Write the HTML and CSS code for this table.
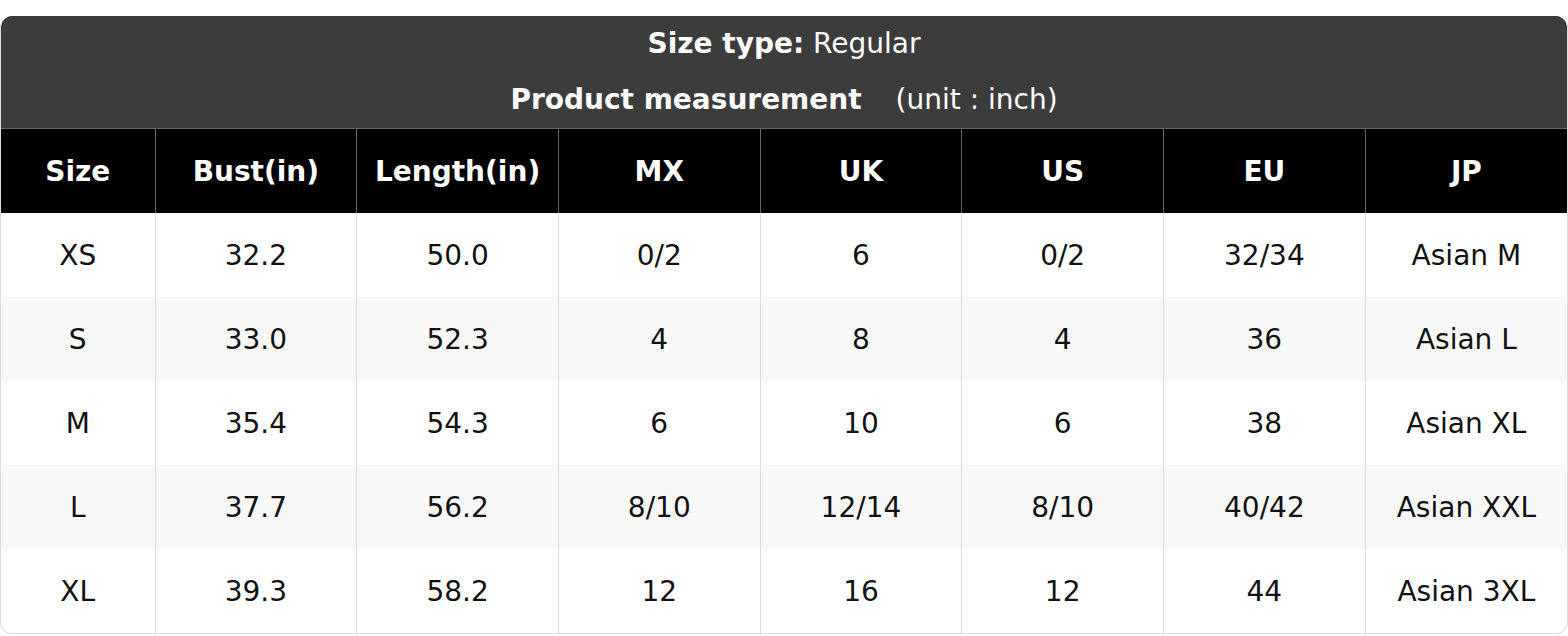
FILE: index.html
```html
<!DOCTYPE html>
<html>
<head>
<meta charset="utf-8">
<link rel="stylesheet" href="styles.css">
</head>
<body>
<div class="chart">
  <div class="chart-head">
    <div class="head-line"><b>Size type:</b> Regular</div>
    <div class="head-line"><b>Product measurement</b><span class="unit">(unit : inch)</span></div>
  </div>
  <table class="size-table">
    <colgroup>
      <col class="col-size">
      <col><col><col><col><col><col><col>
    </colgroup>
    <thead>
      <tr><th>Size</th><th>Bust(in)</th><th>Length(in)</th><th>MX</th><th>UK</th><th>US</th><th>EU</th><th>JP</th></tr>
    </thead>
    <tbody>
      <tr><td>XS</td><td>32.2</td><td>50.0</td><td>0/2</td><td>6</td><td>0/2</td><td>32/34</td><td>Asian M</td></tr>
      <tr><td>S</td><td>33.0</td><td>52.3</td><td>4</td><td>8</td><td>4</td><td>36</td><td>Asian L</td></tr>
      <tr><td>M</td><td>35.4</td><td>54.3</td><td>6</td><td>10</td><td>6</td><td>38</td><td>Asian XL</td></tr>
      <tr><td>L</td><td>37.7</td><td>56.2</td><td>8/10</td><td>12/14</td><td>8/10</td><td>40/42</td><td>Asian XXL</td></tr>
      <tr><td>XL</td><td>39.3</td><td>58.2</td><td>12</td><td>16</td><td>12</td><td>44</td><td>Asian 3XL</td></tr>
    </tbody>
  </table>
</div>
</body>
</html>
```

FILE: styles.css
```css
html, body {
  margin: 0;
  padding: 0;
  background: #fff;
}
body {
  padding-top: 16px;
  font-family: "DejaVu Sans", "Liberation Sans", sans-serif;
  font-size: 28px;
  color: #111;
}
.chart {
  width: 1568px;
  box-sizing: border-box;
  border: 1px solid #dcdcdc;
  border-top: none;
  border-radius: 12px;
  overflow: hidden;
}
.chart-head {
  background: #3c3c3c;
  color: #fff;
  text-align: center;
  height: 112px;
}
.head-line {
  height: 56px;
  line-height: 56px;
}
.head-line b {
  font-weight: bold;
}
.unit {
  margin-left: 34px;
}
.size-table {
  width: 100%;
  border-collapse: collapse;
  table-layout: fixed;
}
.col-size {
  width: 154px;
}
.size-table th {
  background: #000;
  color: #fff;
  font-weight: bold;
  height: 84px;
  padding: 0;
  border-top: 1px solid #666;
  border-left: 1px solid #666;
  text-align: center;
}
.size-table td {
  height: 84px;
  padding: 0;
  text-align: center;
  border-left: 1px solid #dcdcdc;
}
.size-table th:first-child,
.size-table td:first-child {
  border-left: none;
}
.size-table tbody tr:nth-child(even) td {
  background: #f8f8f8;
}
```
